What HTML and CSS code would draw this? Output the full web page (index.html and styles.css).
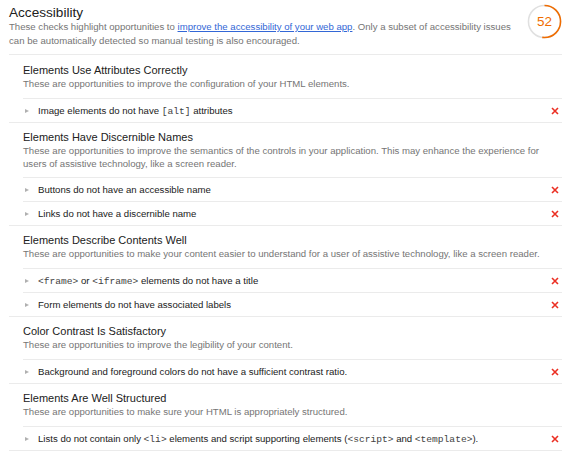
FILE: index.html
```html
<!DOCTYPE html>
<html lang="en">
<head>
<meta charset="utf-8">
<title>Accessibility</title>
<link rel="stylesheet" href="styles.css">
</head>
<body>
<div class="report">
  <header class="cat-header">
    <div class="cat-text">
      <h1 class="cat-title">Accessibility</h1>
      <p class="cat-desc"><span>These checks highlight opportunities to </span><a href="#" class="link">improve the accessibility of your web app</a><span>. Only a subset of accessibility issues</span> <span>can be automatically detected so manual testing is also encouraged.</span></p>
    </div>
    <div class="gauge">
      <svg class="gauge-svg" viewBox="0 0 36 36" width="35" height="35">
        <circle class="gauge-base" cx="18" cy="18" r="16.5"></circle>
        <circle class="gauge-arc" cx="18" cy="18" r="16.5" stroke-dasharray="53.9 103.7" transform="rotate(-90 18 18)"></circle>
      </svg>
      <span class="gauge-num">52</span>
    </div>
  </header>

  <section class="group">
    <div class="group-head group-head-first">
      <h2 class="group-title">Elements Use Attributes Correctly</h2>
      <p class="group-desc">These are opportunities to improve the configuration of your HTML elements.</p>
    </div>
    <div class="audit"><span class="arrow"></span><span class="audit-text">Image elements do not have <code>[alt]</code> attributes</span><svg class="fail" viewBox="0 0 8 8" width="8" height="8"><path d="M1 1L7 7M7 1L1 7"/></svg></div>
  </section>

  <section class="group">
    <div class="group-head group-head-multi">
      <h2 class="group-title">Elements Have Discernible Names</h2>
      <p class="group-desc">These are opportunities to improve the semantics of the controls in your application. This may enhance the experience for users of assistive technology, like a screen reader.</p>
    </div>
    <div class="audit"><span class="arrow"></span><span class="audit-text">Buttons do not have an accessible name</span><svg class="fail" viewBox="0 0 8 8" width="8" height="8"><path d="M1 1L7 7M7 1L1 7"/></svg></div>
    <div class="audit"><span class="arrow"></span><span class="audit-text">Links do not have a discernible name</span><svg class="fail" viewBox="0 0 8 8" width="8" height="8"><path d="M1 1L7 7M7 1L1 7"/></svg></div>
  </section>

  <section class="group">
    <div class="group-head">
      <h2 class="group-title">Elements Describe Contents Well</h2>
      <p class="group-desc">These are opportunities to make your content easier to understand for a user of assistive technology, like a screen reader.</p>
    </div>
    <div class="audit"><span class="arrow"></span><span class="audit-text"><code>&lt;frame&gt;</code> or <code>&lt;iframe&gt;</code> elements do not have a title</span><svg class="fail" viewBox="0 0 8 8" width="8" height="8"><path d="M1 1L7 7M7 1L1 7"/></svg></div>
    <div class="audit"><span class="arrow"></span><span class="audit-text">Form elements do not have associated labels</span><svg class="fail" viewBox="0 0 8 8" width="8" height="8"><path d="M1 1L7 7M7 1L1 7"/></svg></div>
  </section>

  <section class="group">
    <div class="group-head">
      <h2 class="group-title">Color Contrast Is Satisfactory</h2>
      <p class="group-desc">These are opportunities to improve the legibility of your content.</p>
    </div>
    <div class="audit"><span class="arrow"></span><span class="audit-text">Background and foreground colors do not have a sufficient contrast ratio.</span><svg class="fail" viewBox="0 0 8 8" width="8" height="8"><path d="M1 1L7 7M7 1L1 7"/></svg></div>
  </section>

  <section class="group">
    <div class="group-head">
      <h2 class="group-title">Elements Are Well Structured</h2>
      <p class="group-desc">These are opportunities to make sure your HTML is appropriately structured.</p>
    </div>
    <div class="audit"><span class="arrow"></span><span class="audit-text">Lists do not contain only <code>&lt;li&gt;</code> elements and script supporting elements (<code>&lt;script&gt;</code> and <code>&lt;template&gt;</code>).</span><svg class="fail" viewBox="0 0 8 8" width="8" height="8"><path d="M1 1L7 7M7 1L1 7"/></svg></div>
  </section>
</div>
</body>
</html>
```

FILE: styles.css
```css
html, body {
  margin: 0;
  padding: 0;
  background: #ffffff;
}

body {
  font-family: "Liberation Sans", Arial, sans-serif;
  color: #212121;
}

.report {
  padding: 0 8px 0 9px;
}

.cat-header {
  display: flex;
  align-items: flex-start;
  gap: 14px;
  padding: 4px 0 7px;
  border-bottom: 1px solid #ebebeb;
}

.cat-text {
  flex: 1;
  padding-top: 2px;
}

.cat-title {
  margin: 0;
  font-size: 13.6px;
  line-height: 14px;
  font-weight: normal;
  color: #212121;
}

.cat-desc {
  margin: 0;
  font-size: 9.6px;
  line-height: 13.5px;
  color: #757575;
}

.link {
  color: #3367d6;
  text-decoration: underline;
}

.gauge {
  position: relative;
  width: 35px;
  height: 35px;
  flex: none;
}

.gauge-svg {
  display: block;
}

.gauge-base {
  fill: none;
  stroke: #e0e0e0;
  stroke-width: 1.6;
}

.gauge-arc {
  fill: none;
  stroke: #ef6c00;
  stroke-width: 1.6;
}

.gauge-num {
  position: absolute;
  inset: 0;
  display: flex;
  align-items: center;
  justify-content: center;
  font-size: 13.5px;
  color: #ef6c00;
}

.group {
  border-bottom: 1px solid #ebebeb;
  padding-left: 14px;
}

.group-head {
  padding: 8px 0;
  border-bottom: 1px solid #ebebeb;
}

.group-head-first {
  padding-top: 9px;
}

.group-head-multi {
  padding-bottom: 7px;
}

.group-title {
  margin: 0;
  font-size: 11px;
  line-height: 13px;
  font-weight: normal;
  color: #212121;
}

.group-desc {
  margin: 0;
  font-size: 9.6px;
  line-height: 13px;
  color: #757575;
}

.audit {
  display: flex;
  align-items: center;
  height: 23px;
  border-bottom: 1px solid #ebebeb;
  font-size: 9.6px;
  color: #212121;
}

.audit:last-child {
  border-bottom: none;
}

.arrow {
  flex: none;
  width: 0;
  height: 0;
  margin: 0 9px 0 2px;
  border-left: 4px solid #b0b0b0;
  border-top: 2.5px solid transparent;
  border-bottom: 2.5px solid transparent;
}

.audit-text {
  flex: 1;
}

code {
  font-family: "Liberation Mono", "DejaVu Sans Mono", monospace;
  font-size: 9.6px;
  color: #424242;
}

.fail {
  flex: none;
  margin-right: 3px;
  fill: none;
  stroke: #eb2f23;
  stroke-width: 1.6;
}
```
